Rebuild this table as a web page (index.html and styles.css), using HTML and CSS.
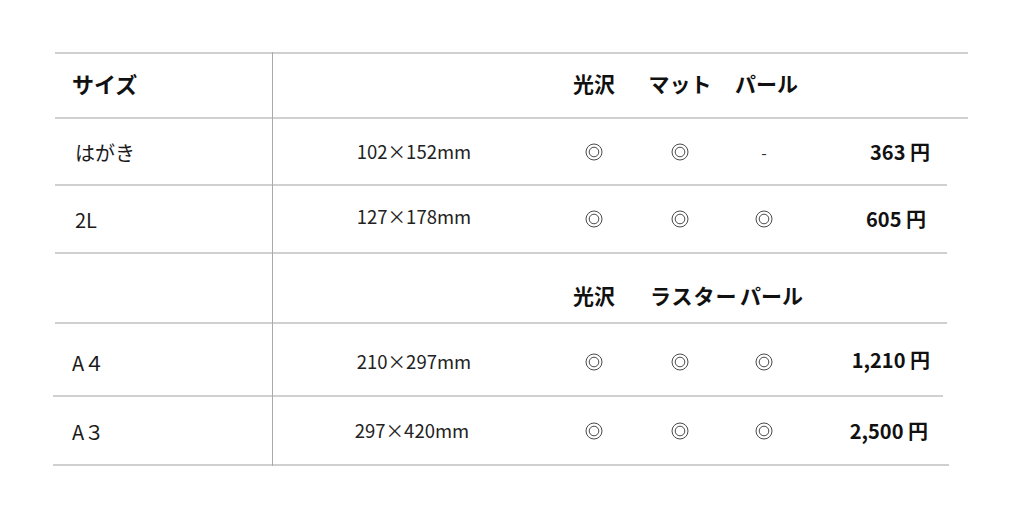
FILE: index.html
```html
<!DOCTYPE html>
<html lang="ja">
<head>
<meta charset="utf-8">
<title>サイズ</title>
<link rel="stylesheet" href="styles.css">
</head>
<body>
<div class="table">
  <div class="row row-head row-top">
    <div class="cell cell-size head">サイズ</div>
    <div class="cell cell-dim"></div>
    <div class="cell head">光沢</div>
    <div class="cell head">マット</div>
    <div class="cell head head-pearl-1">パール</div>
    <div class="cell"></div>
  </div>
  <div class="row row-2">
    <div class="cell cell-size">はがき</div>
    <div class="cell cell-dim">102×152mm</div>
    <div class="cell"><svg class="mark" viewBox="0 0 18 18"><circle cx="9" cy="9" r="8"/><circle cx="9" cy="9" r="4.8"/></svg></div>
    <div class="cell"><svg class="mark" viewBox="0 0 18 18"><circle cx="9" cy="9" r="8"/><circle cx="9" cy="9" r="4.8"/></svg></div>
    <div class="cell dash">-</div>
    <div class="cell price">363 円</div>
  </div>
  <div class="row row-3">
    <div class="cell cell-size">2L</div>
    <div class="cell cell-dim">127×178mm</div>
    <div class="cell"><svg class="mark" viewBox="0 0 18 18"><circle cx="9" cy="9" r="8"/><circle cx="9" cy="9" r="4.8"/></svg></div>
    <div class="cell"><svg class="mark" viewBox="0 0 18 18"><circle cx="9" cy="9" r="8"/><circle cx="9" cy="9" r="4.8"/></svg></div>
    <div class="cell"><svg class="mark" viewBox="0 0 18 18"><circle cx="9" cy="9" r="8"/><circle cx="9" cy="9" r="4.8"/></svg></div>
    <div class="cell price price-605">605 円</div>
  </div>
  <div class="row row-head row-4">
    <div class="cell cell-size"></div>
    <div class="cell cell-dim"></div>
    <div class="cell head head-gloss">光沢</div>
    <div class="cell head head-luster">ラスター</div>
    <div class="cell head head-pearl">パール</div>
    <div class="cell"></div>
  </div>
  <div class="row row-5">
    <div class="cell cell-size cell-size-a">A４</div>
    <div class="cell cell-dim">210×297mm</div>
    <div class="cell"><svg class="mark" viewBox="0 0 18 18"><circle cx="9" cy="9" r="8"/><circle cx="9" cy="9" r="4.8"/></svg></div>
    <div class="cell"><svg class="mark" viewBox="0 0 18 18"><circle cx="9" cy="9" r="8"/><circle cx="9" cy="9" r="4.8"/></svg></div>
    <div class="cell"><svg class="mark" viewBox="0 0 18 18"><circle cx="9" cy="9" r="8"/><circle cx="9" cy="9" r="4.8"/></svg></div>
    <div class="cell price">1,210 円</div>
  </div>
  <div class="row row-6">
    <div class="cell cell-size cell-size-a">A３</div>
    <div class="cell cell-dim dim-shift">297×420mm</div>
    <div class="cell"><svg class="mark" viewBox="0 0 18 18"><circle cx="9" cy="9" r="8"/><circle cx="9" cy="9" r="4.8"/></svg></div>
    <div class="cell"><svg class="mark" viewBox="0 0 18 18"><circle cx="9" cy="9" r="8"/><circle cx="9" cy="9" r="4.8"/></svg></div>
    <div class="cell"><svg class="mark" viewBox="0 0 18 18"><circle cx="9" cy="9" r="8"/><circle cx="9" cy="9" r="4.8"/></svg></div>
    <div class="cell price price-2500">2,500 円</div>
  </div>
</div>
</body>
</html>
```

FILE: styles.css
```css
html, body {
  margin: 0;
  padding: 0;
  background: #ffffff;
}

body {
  font-family: "Noto Sans CJK JP", "Noto Sans", sans-serif;
  color: #1a1a1a;
  font-size: 20px;
}

.table {
  display: flex;
  flex-direction: column;
  align-items: flex-start;
  padding: 52px 0 0 55px;
}

.row {
  box-sizing: border-box;
  display: grid;
  grid-template-columns: 218px 282px 78px 94px 74px 129px 1fr;
  border-bottom: 2px solid #d0d0d0;
}

.row-top {
  border-top: 2px solid #d0d0d0;
  width: 913px;
  height: 67px;
}

.row-2 { width: 892px; height: 67px; }
.row-3 { width: 892px; height: 68px; }
.row-4 { width: 892px; height: 70px; }
.row-5 { width: 890px; height: 73px; margin-left: -2px; grid-template-columns: 220px 282px 78px 94px 74px 129px 1fr; }
.row-6 { width: 896px; height: 69px; margin-left: -2px; grid-template-columns: 220px 282px 78px 94px 74px 129px 1fr; }

.cell {
  display: flex;
  align-items: center;
  justify-content: center;
  line-height: 1;
  white-space: nowrap;
}

.cell-size {
  justify-content: flex-start;
  padding-left: 20px;
  border-right: 1px solid #a9a9a9;
  box-sizing: border-box;
  margin-bottom: -2px;
}

.row-top .cell-size {
  margin-top: -2px;
  padding-top: 2px;
}

.cell-size-a {
  padding-left: 19px;
}

.head {
  font-weight: 700;
  font-size: 21px;
  color: #111111;
}

.row-top .head {
  padding-bottom: 4px;
}

.row-top .cell-size.head {
  padding-left: 17px;
  padding-bottom: 8px;
  font-size: 22px;
}

.head-pearl-1 {
  padding-left: 5px;
}

.row-4 .head {
  padding-top: 14px;
}

.head-luster {
  justify-content: flex-start;
  padding-left: 17px;
  letter-spacing: 1px;
}

.head-pearl {
  justify-content: flex-start;
  padding-left: 13px;
}

.cell-dim {
  font-size: 18.5px;
  color: #222222;
}

.row-3 .cell-dim {
  padding-bottom: 5px;
}

.row-5 .cell-dim,
.row-5 .cell,
.row-5 .cell-size {
  padding-top: 4px;
}

.row-5 .price {
  padding-top: 0;
}

.dim-shift {
  padding-right: 4px;
}

.mark {
  width: 18px;
  height: 18px;
  fill: none;
  stroke: #4a4a4a;
  stroke-width: 1;
}

.dash {
  font-size: 16px;
  color: #333333;
}

.price {
  justify-content: flex-end;
  font-weight: 700;
  color: #111111;
}

.price-605 {
  padding-right: 4px;
}

.price-2500 {
  padding-right: 2px;
}
```
